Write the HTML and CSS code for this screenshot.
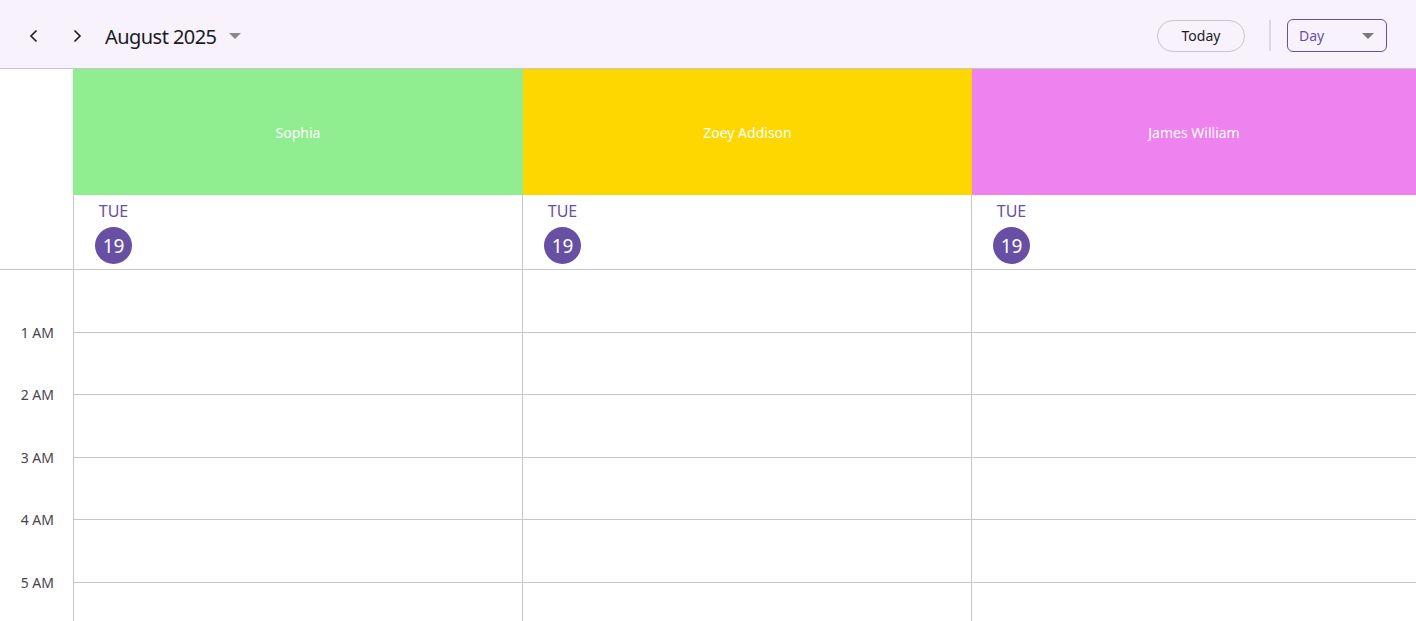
FILE: index.html
```html
<!DOCTYPE html>
<html>
<head>
<meta charset="utf-8">
<link rel="stylesheet" href="styles.css">
</head>
<body>
<div class="app">
  <header class="toolbar">
    <div class="nav">
      <button class="icon-btn" aria-label="Previous">
        <svg width="16" height="16" viewBox="0 0 16 16"><path d="M10.5 2.5 L5 8 L10.5 13.5" fill="none" stroke="#1c1b1f" stroke-width="1.6"/></svg>
      </button>
      <button class="icon-btn" aria-label="Next">
        <svg width="16" height="16" viewBox="0 0 16 16"><path d="M5.5 2.5 L11 8 L5.5 13.5" fill="none" stroke="#1c1b1f" stroke-width="1.6"/></svg>
      </button>
      <div class="month">August 2025</div>
      <svg class="caret" width="12" height="6" viewBox="0 0 12 6"><path d="M0 0 L12 0 L6 6 Z" fill="#8a8590"/></svg>
    </div>
    <div class="actions">
      <button class="today">Today</button>
      <div class="divider"></div>
      <div class="view-select">
        <span>Day</span>
        <svg width="12" height="6" viewBox="0 0 12 6"><path d="M0 0 L12 0 L6 6 Z" fill="#7a7580"/></svg>
      </div>
    </div>
  </header>

  <div class="grid">
    <div class="corner"></div>
    <div class="resource green">Sophia</div>
    <div class="resource gold">Zoey Addison</div>
    <div class="resource violet">James William</div>

    <div class="date-cell">
      <div class="date"><span class="dow">TUE</span><span class="day-num">19</span></div>
    </div>
    <div class="date-cell">
      <div class="date"><span class="dow">TUE</span><span class="day-num">19</span></div>
    </div>
    <div class="date-cell">
      <div class="date"><span class="dow">TUE</span><span class="day-num">19</span></div>
    </div>

    <div class="times">
      <div class="time-row"><span>1 AM</span></div>
      <div class="time-row"><span>2 AM</span></div>
      <div class="time-row"><span>3 AM</span></div>
      <div class="time-row"><span>4 AM</span></div>
      <div class="time-row"><span>5 AM</span></div>
      <div class="time-row"></div>
    </div>
    <div class="col">
      <div class="slot"></div><div class="slot"></div><div class="slot"></div><div class="slot"></div><div class="slot"></div><div class="slot"></div>
    </div>
    <div class="col">
      <div class="slot"></div><div class="slot"></div><div class="slot"></div><div class="slot"></div><div class="slot"></div><div class="slot"></div>
    </div>
    <div class="col last">
      <div class="slot"></div><div class="slot"></div><div class="slot"></div><div class="slot"></div><div class="slot"></div><div class="slot"></div>
    </div>
  </div>
</div>
</body>
</html>
```

FILE: styles.css
```css
* { box-sizing: border-box; }
html, body {
  margin: 0;
  padding: 0;
  width: 1416px;
  height: 621px;
  overflow: hidden;
  background: #ffffff;
  font-family: "Noto Sans", "Open Sans", sans-serif;
  color: #1c1b1f;
}
.app { width: 1416px; height: 621px; overflow: hidden; }

.toolbar {
  height: 69px;
  background: #f7f2fc;
  border-bottom: 1px solid #cac4d0;
  display: flex;
  align-items: center;
  justify-content: space-between;
  padding: 3px 29px 0 18px;
}
.nav { display: flex; align-items: center; }
.icon-btn {
  width: 32px;
  height: 32px;
  border: none;
  background: transparent;
  padding: 0;
  margin-right: 11px;
  display: flex;
  align-items: center;
  justify-content: center;
}
.month {
  font-size: 20px;
  margin-left: 1px;
  margin-right: 12px;
  letter-spacing: -0.55px;
  padding-top: 1px;
}
.caret { margin-top: 1px; }

.actions { display: flex; align-items: center; height: 33px; }
.today {
  width: 88px;
  height: 32px;
  border-radius: 16px;
  border: 1px solid #cac4d0;
  background: transparent;
  font-family: inherit;
  font-size: 14px;
  color: #1c1b1f;
  padding: 0;
}
.divider {
  width: 2px;
  height: 31px;
  background: #dcd7e0;
  margin: 0 16px 0 24px;
}
.view-select {
  width: 100px;
  height: 33px;
  border: 1px solid #6750a4;
  border-radius: 6px;
  display: flex;
  align-items: center;
  justify-content: space-between;
  padding: 0 12px 0 11px;
  font-size: 14px;
  color: #6750a4;
}

.grid {
  display: grid;
  grid-template-columns: 74px 449px 449px 444px;
  grid-template-rows: 126px 75px auto;
}
.corner { grid-row: 1 / 3; border-right: 1px solid #cac4d0; border-bottom: 1px solid #cac4d0; }
.resource {
  display: flex;
  align-items: center;
  justify-content: center;
  color: #ffffff;
  font-size: 14px;
}
.green { background: #90ee90; margin-left: -1px; }
.gold { background: #ffd700; }
.violet { background: #ee82ee; }

.date-cell {
  border-right: 1px solid #cac4d0;
  border-bottom: 1px solid #cac4d0;
  padding: 5px 0 0 21px;
}
.date-cell:nth-child(7) { border-right: none; }
.date {
  display: inline-flex;
  flex-direction: column;
  align-items: center;
  width: 37px;
}
.dow {
  font-size: 16px;
  color: #6750a4;
  line-height: 20px;
  margin-bottom: 6px;
}
.day-num {
  width: 37px;
  height: 37px;
  border-radius: 50%;
  background: #6750a4;
  color: #ffffff;
  font-size: 19px;
  display: flex;
  align-items: center;
  justify-content: center;
}

.times { border-right: 1px solid #cac4d0; }
.time-row {
  height: 62.5px;
  display: flex;
  align-items: flex-end;
  justify-content: flex-end;
  padding-right: 19px;
}
.time-row span {
  font-size: 14px;
  color: #49454f;
  line-height: 18px;
  transform: translateY(9px);
}
.col { border-right: 1px solid #cac4d0; }
.col.last { border-right: none; }
.slot {
  height: 62.5px;
  border-bottom: 1px solid #cac4d0;
}
```
